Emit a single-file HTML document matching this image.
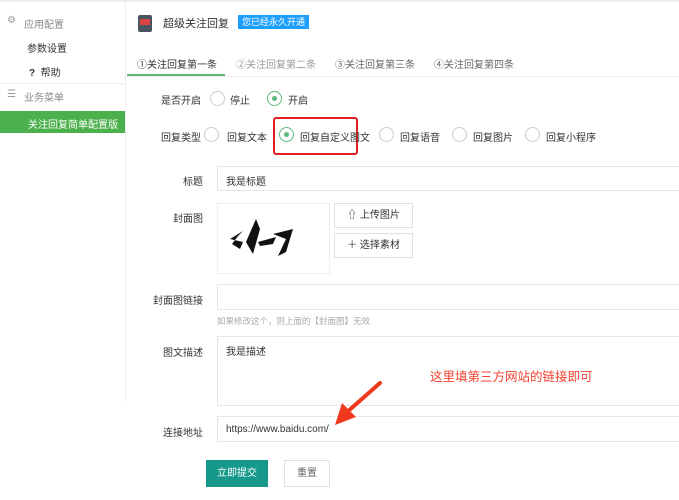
<!DOCTYPE html><html><head><meta charset="utf-8"><style>
*{margin:0;padding:0;box-sizing:border-box}
body{width:679px;height:500px;overflow:hidden;background:#fff;font-family:"Liberation Sans","Noto Sans CJK SC",sans-serif;font-size:10px;color:#333;position:relative}
.a{position:absolute;white-space:nowrap}
.r{position:absolute;width:15px;height:15px;border:1px solid #ccc;border-radius:50%;background:#fff}
.r.on{border-color:#5fb878}
.r.on:after{content:"";position:absolute;left:4px;top:4px;width:5px;height:5px;border-radius:50%;background:#5fb878}
.inp{position:absolute;left:217px;right:-2px;border:1px solid #e6e6e6;background:#fff}
.lab{position:absolute;right:476px;white-space:nowrap}
.btn{position:absolute;border:1px solid #e0e0e0;background:#fff;text-align:center}
</style></head><body>
<div class="a" style="left:0;top:0;width:679px;height:2px;background:#eee"></div>
<div class="a" style="left:125px;top:2px;width:1px;height:400px;background:#eee"></div>
<div class="a" style="left:7px;top:15px;color:#999">⚙</div>
<div class="a" style="left:24px;top:16px;color:#888">应用配置</div>
<div class="a" style="left:27px;top:40px">参数设置</div>
<div class="a" style="left:29px;top:64px"><b>?</b>&nbsp; 帮助</div>
<div class="a" style="left:0;top:83px;width:125px;height:1px;background:#eee"></div>
<div class="a" style="left:7px;top:89px;color:#999">☰</div>
<div class="a" style="left:24px;top:89px;color:#888">业务菜单</div>
<div class="a" style="left:0;top:111px;width:125px;height:22px;background:#4cb04c"></div>
<div class="a" style="left:28px;top:116px;color:#fff">关注回复简单配置版</div>
<div class="a" style="left:138px;top:15px;width:14px;height:17px;background:#4a5560;border-radius:2px"><div style="margin:4px 2px;height:6px;background:#d44"></div></div>
<div class="a" style="left:163px;top:15px;font-size:11px">超级关注回复</div>
<div class="a" style="left:238px;top:15px;height:14px;padding:0 4px;background:#1e9fff;color:#fff;font-size:9px;line-height:14px">您已经永久开通</div>
<div class="a" style="left:126px;top:76px;width:553px;height:1px;background:#eee"></div>
<div class="a" style="left:127px;top:74px;width:98px;height:2px;background:#5fb878"></div>
<div class="a" style="left:137px;top:56px">①关注回复第一条</div>
<div class="a" style="left:236px;top:56px;color:#999">②关注回复第二条</div>
<div class="a" style="left:335px;top:56px;color:#666">③关注回复第三条</div>
<div class="a" style="left:434px;top:56px;color:#666">④关注回复第四条</div>
<div class="a" style="left:161px;top:92px">是否开启</div>
<div class="r" style="left:210px;top:91px"></div><div class="a" style="left:230px;top:92px">停止</div>
<div class="r on" style="left:267px;top:91px"></div><div class="a" style="left:288px;top:92px">开启</div>
<div class="a" style="left:161px;top:129px">回复类型</div>
<div class="r" style="left:204px;top:127px"></div><div class="a" style="left:227px;top:129px">回复文本</div>
<div class="a" style="left:273px;top:117px;width:85px;height:38px;border:2px solid #e02020;border-radius:3px"></div>
<div class="r on" style="left:279px;top:127px"></div><div class="a" style="left:300px;top:129px">回复自定义图文</div>
<div class="r" style="left:379px;top:127px"></div><div class="a" style="left:400px;top:129px">回复语音</div>
<div class="r" style="left:452px;top:127px"></div><div class="a" style="left:473px;top:129px">回复图片</div>
<div class="r" style="left:525px;top:127px"></div><div class="a" style="left:546px;top:129px">回复小程序</div>
<div class="lab" style="top:173px">标题</div>
<div class="inp" style="top:166px;height:25px;padding:6px 8px">我是标题</div>
<div class="lab" style="top:210px">封面图</div>
<div class="a" style="left:217px;top:203px;width:113px;height:71px;border:1px solid #eee">
<svg width="111" height="69"><path d="M12 35 L25 27 L20 32 L14 40 L22 45 L25 38 Z M28 38 L38 15 L42 25 L35 50 L32 45 Z M40 38 L58 33 L55 40 L42 42Z M55 30 L75 25 L68 48 L60 52 L68 35Z" fill="#111"/></svg></div>
<div class="btn" style="left:334px;top:203px;width:79px;height:25px;line-height:23px">⇧ 上传图片</div>
<div class="btn" style="left:334px;top:233px;width:79px;height:25px;line-height:23px">＋ 选择素材</div>
<div class="lab" style="top:292px">封面图链接</div>
<div class="inp" style="top:284px;height:26px"></div>
<div class="a" style="left:217px;top:315px;font-size:8.5px;color:#aaa">如果修改这个，则上面的【封面图】无效</div>
<div class="lab" style="top:344px">图文描述</div>
<div class="inp" style="top:336px;height:70px;padding:6px 8px">我是描述</div>
<div class="a" style="left:430px;top:366px;font-size:12.5px;color:#f5412f">这里填第三方网站的链接即可</div>
<div class="lab" style="top:424px">连接地址</div>
<div class="inp" style="top:416px;height:26px;padding:7px 8px">https://www.baidu.com/</div>
<svg class="a" style="left:330px;top:375px" width="60" height="55"><path d="M50 8 L16 38" stroke="#f03a1e" stroke-width="4" stroke-linecap="round"/><path d="M5 50 L12 28 L26 42 Z" fill="#f03a1e"/></svg>
<div class="a" style="left:206px;top:460px;width:62px;height:27px;background:#16988a;color:#fff;text-align:center;line-height:27px">立即提交</div>
<div class="btn" style="left:284px;top:460px;width:46px;height:27px;line-height:25px;color:#666">重置</div>
</body></html>
